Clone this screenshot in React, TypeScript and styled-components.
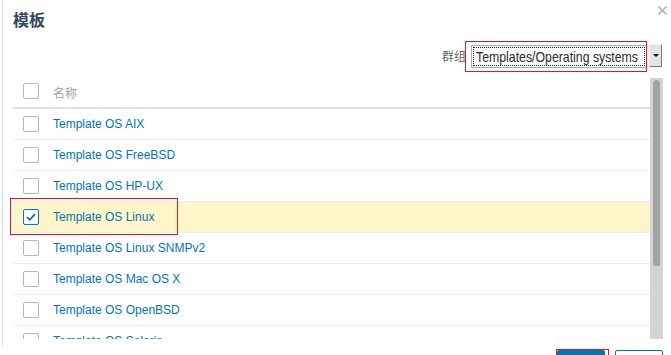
import React from "react";
import styled, { createGlobalStyle } from "styled-components";

const GlobalStyle = createGlobalStyle`
  html, body {
    margin: 0;
    padding: 0;
    background: #ffffff;
    overflow: hidden;
  }
  body {
    font-family: "Liberation Sans", Arial, "Noto Sans CJK SC", sans-serif;
  }
`;

const Dialog = styled.div`
  width: 671px;
  height: 355px;
  overflow: hidden;
  display: flex;
  flex-direction: column;
`;

const Body = styled.div`
  margin-left: 2px;
  border-left: 1px solid #dde3e8;
  padding: 0 8px 7px 7px;
  height: 346px;
  box-sizing: border-box;
  display: flex;
  flex-direction: column;
`;

const Header = styled.div`
  height: 41px;
  padding-left: 3px;
  display: flex;
  justify-content: space-between;
  align-items: flex-start;
`;

const Title = styled.h4`
  margin: 0;
  padding-top: 9px;
  font-family: "Noto Sans CJK SC", sans-serif;
  font-size: 16px;
  line-height: 20px;
  font-weight: 700;
  color: #34495a;
`;

const Close = styled.svg`
  margin-top: 6px;
  margin-right: -4px;
`;

const Toolbar = styled.div`
  height: 37px;
  padding-top: 3px;
  box-sizing: border-box;
  display: flex;
  justify-content: flex-end;
  align-items: flex-start;
`;

const Label = styled.span`
  margin-top: 4px;
  margin-right: 5px;
  font-family: "Noto Sans CJK SC", sans-serif;
  font-size: 12px;
  line-height: 16px;
  color: #666666;
`;

const SelectBox = styled.div`
  position: relative;
  margin-top: 1px;
  width: 176px;
  height: 23px;
  box-sizing: border-box;
  border: 1px solid #a6b0b8;
  padding: 1px;
  background: #ffffff;
`;

const SelectValue = styled.div`
  height: 100%;
  box-sizing: border-box;
  border: 1px dotted #222;
  padding-left: 2px;
  overflow: hidden;
`;

const SelectText = styled.span`
  display: inline-block;
  font-family: "Liberation Sans", Arial, sans-serif;
  font-size: 15px;
  line-height: 17px;
  color: #1f2c33;
  white-space: nowrap;
  transform: scaleX(0.82);
  transform-origin: left center;
`;

const ArrowButton = styled.div`
  margin-left: 2px;
  margin-right: 1px;
  width: 13px;
  height: 23px;
  box-sizing: border-box;
  background: #e4e4e4;
  border-top: 1px solid #f4f4f4;
  border-left: 1px solid #f4f4f4;
  border-right: 1px solid #7a7a7a;
  border-bottom: 1px solid #7a7a7a;
  display: flex;
  align-items: center;
  justify-content: center;
`;

const Arrow = styled.span`
  width: 0;
  height: 0;
  border-left: 3px solid transparent;
  border-right: 3px solid transparent;
  border-top: 3px solid #000;
`;

const Mark = styled.div<{ $l: number; $t: number; $w: number; $h: number }>`
  position: absolute;
  left: ${(p) => p.$l}px;
  top: ${(p) => p.$t}px;
  width: ${(p) => p.$w}px;
  height: ${(p) => p.$h}px;
  box-sizing: border-box;
  border: 1px solid #e8141b;
  pointer-events: none;
`;

const Scroll = styled.div`
  height: 261px;
  padding-left: 3px;
  display: flex;
  overflow: hidden;
`;

const List = styled.div`
  flex: 1;
  min-width: 0;
`;

const Track = styled.div`
  width: 13px;
  flex: none;
  background: #d4d4d4;
  box-sizing: border-box;
  padding: 2px 3px 0 3px;
`;

const Thumb = styled.div`
  height: 186px;
  background: #a3a3a3;
  border-radius: 6px 6px 3px 3px;
`;

const HeadRow = styled.div`
  height: 31px;
  padding: 0 0 3px 10px;
  box-sizing: border-box;
  border-bottom: 2px solid #dfe4e7;
  display: flex;
  align-items: center;
`;

const HeadText = styled.span`
  font-family: "Noto Sans CJK SC", sans-serif;
  font-size: 12px;
  line-height: 16px;
  color: #9aa3a9;
  margin-top: 3px;
`;

const Row = styled.div<{ $selected?: boolean }>`
  position: relative;
  height: 31px;
  box-sizing: border-box;
  padding-left: 10px;
  border-bottom: 1px solid #ebeef0;
  background: ${(p) => (p.$selected ? "#fcf6c8" : "transparent")};
  display: flex;
  align-items: center;
`;

const Box = styled.span<{ $checked?: boolean }>`
  width: 16px;
  height: 16px;
  flex: none;
  box-sizing: border-box;
  margin-right: 14px;
  border: 1px solid ${(p) => (p.$checked ? "#0275b8" : "#acbac3")};
  border-radius: 2px;
  background: #ffffff;
  display: flex;
  align-items: center;
  justify-content: center;
`;

const Link = styled.a`
  font-size: 12px;
  line-height: 14px;
  color: #0275b8;
  text-decoration: none;
  white-space: nowrap;
`;

const Footer = styled.div`
  padding: 4px 8px 0 0;
  display: flex;
  justify-content: flex-end;
  gap: 10px;
`;

const Button = styled.button<{ $alt?: boolean }>`
  position: relative;
  width: 48px;
  height: 26px;
  padding: 6px 0 0;
  border: 1px solid #0275b8;
  border-radius: 2px;
  background: ${(p) => (p.$alt ? "#ffffff" : "#0275b8")};
  color: ${(p) => (p.$alt ? "#0275b8" : "#ffffff")};
  font-family: "Noto Sans CJK SC", sans-serif;
  font-size: 12px;
  line-height: 18px;
`;

const templates = [
  "Template OS AIX",
  "Template OS FreeBSD",
  "Template OS HP-UX",
  "Template OS Linux",
  "Template OS Linux SNMPv2",
  "Template OS Mac OS X",
  "Template OS OpenBSD",
  "Template OS Solaris",
  "Template OS Windows",
];

const Check = () => (
  <svg width="10" height="8" viewBox="0 0 10 8">
    <path d="M1 4.2 L3.8 6.8 L9 1.2" fill="none" stroke="#0275b8" strokeWidth="1.8" />
  </svg>
);

export default function App() {
  return (
    <>
      <GlobalStyle />
      <Dialog>
        <Body>
          <Header>
            <Title>模板</Title>
            <Close width="9" height="9" viewBox="0 0 9 9">
              <path d="M0.5 0.5 L8.5 8.5 M8.5 0.5 L0.5 8.5" stroke="#b4b8bb" strokeWidth="1.6" />
            </Close>
          </Header>
          <Toolbar>
            <Label>群组</Label>
            <SelectBox>
              <SelectValue>
                <SelectText>Templates/Operating systems</SelectText>
              </SelectValue>
              <Mark $l={-7} $t={-5} $w={182} $h={31} />
            </SelectBox>
            <ArrowButton>
              <Arrow />
            </ArrowButton>
          </Toolbar>
          <Scroll>
            <List>
              <HeadRow>
                <Box />
                <HeadText>名称</HeadText>
              </HeadRow>
              {templates.map((name) => {
                const selected = name === "Template OS Linux";
                return (
                  <Row key={name} $selected={selected}>
                    <Box $checked={selected}>{selected && <Check />}</Box>
                    <Link href="#">{name}</Link>
                    {selected && <Mark $l={-3} $t={-4} $w={168} $h={37} />}
                  </Row>
                );
              })}
            </List>
            <Track>
              <Thumb />
            </Track>
          </Scroll>
        </Body>
        <Footer>
          <Button>
            选择
            <Mark $l={-2} $t={-2} $w={53} $h={30} />
          </Button>
          <Button $alt>取消</Button>
        </Footer>
      </Dialog>
    </>
  );
}
